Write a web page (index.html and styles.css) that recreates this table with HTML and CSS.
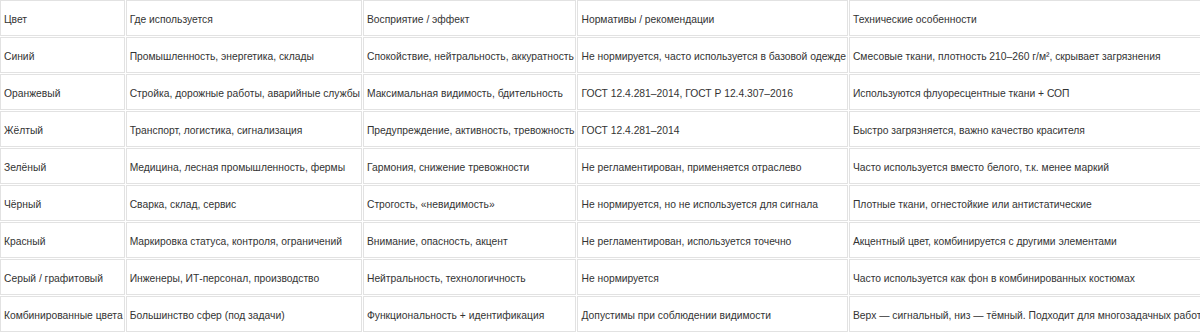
FILE: index.html
```html
<!DOCTYPE html>
<html lang="ru">
<head>
<meta charset="utf-8">
<link rel="stylesheet" href="styles.css">
</head>
<body>
<table class="tbl">
<tr><td>Цвет</td><td>Где используется</td><td>Восприятие / эффект</td><td>Нормативы / рекомендации</td><td>Технические особенности</td></tr>
<tr><td>Синий</td><td>Промышленность, энергетика, склады</td><td>Спокойствие, нейтральность, аккуратность</td><td>Не нормируется, часто используется в базовой одежде</td><td>Смесовые ткани, плотность 210–260 г/м², скрывает загрязнения</td></tr>
<tr><td>Оранжевый</td><td>Стройка, дорожные работы, аварийные службы</td><td>Максимальная видимость, бдительность</td><td>ГОСТ 12.4.281–2014, ГОСТ Р 12.4.307–2016</td><td>Используются флуоресцентные ткани + СОП</td></tr>
<tr><td>Жёлтый</td><td>Транспорт, логистика, сигнализация</td><td>Предупреждение, активность, тревожность</td><td>ГОСТ 12.4.281–2014</td><td>Быстро загрязняется, важно качество красителя</td></tr>
<tr><td>Зелёный</td><td>Медицина, лесная промышленность, фермы</td><td>Гармония, снижение тревожности</td><td>Не регламентирован, применяется отраслево</td><td>Часто используется вместо белого, т.к. менее маркий</td></tr>
<tr><td>Чёрный</td><td>Сварка, склад, сервис</td><td>Строгость, «невидимость»</td><td>Не нормируется, но не используется для сигнала</td><td>Плотные ткани, огнестойкие или антистатические</td></tr>
<tr><td>Красный</td><td>Маркировка статуса, контроля, ограничений</td><td>Внимание, опасность, акцент</td><td>Не регламентирован, используется точечно</td><td>Акцентный цвет, комбинируется с другими элементами</td></tr>
<tr><td>Серый / графитовый</td><td>Инженеры, ИТ-персонал, производство</td><td>Нейтральность, технологичность</td><td>Не нормируется</td><td>Часто используется как фон в комбинированных костюмах</td></tr>
<tr><td>Комбинированные цвета</td><td>Большинство сфер (под задачи)</td><td>Функциональность + идентификация</td><td>Допустимы при соблюдении видимости</td><td>Верх — сигнальный, низ — тёмный. Подходит для многозадачных работ</td></tr>
</table>
</body>
</html>
```
FILE: styles.css
```css
html, body {
  margin: 0;
  padding: 0;
  background: #fff;
  overflow: hidden;
}
.tbl {
  width: 1200px;
  border-collapse: separate;
  border-spacing: 1px;
  font-family: "Liberation Sans", Arial, sans-serif;
  font-size: 10.3px;
  color: #333;
  margin-left: -1px;
  margin-top: -1px;
}
.tbl td {
  border: 1px solid #e2e2e2;
  padding: 12px 1px 8px 3px;
  line-height: 14px;
  white-space: nowrap;
  text-align: left;
  vertical-align: middle;
}
.tbl td:not(:last-child) {
  width: 1px;
}
```
